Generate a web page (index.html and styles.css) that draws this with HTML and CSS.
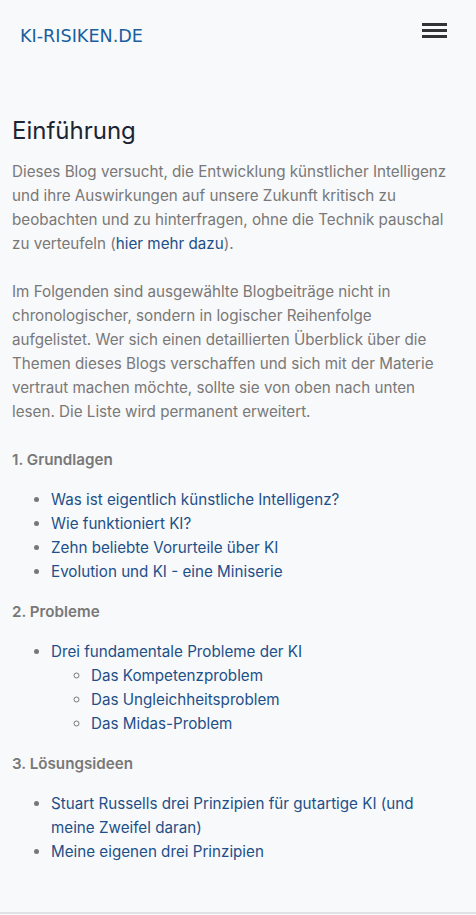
FILE: index.html
```html
<!DOCTYPE html>
<html lang="de">
<head>
<meta charset="utf-8">
<title>KI-Risiken.de</title>
<link rel="stylesheet" href="styles.css">
</head>
<body>
<header class="navbar">
  <a class="brand" href="#">KI-RISIKEN.DE</a>
  <button class="toggler" aria-label="Menü">
    <span class="bar"></span>
    <span class="bar"></span>
    <span class="bar"></span>
  </button>
</header>
<main class="content">
  <h1 class="title">Einführung</h1>
  <p class="text">Dieses Blog versucht, die Entwicklung künstlicher Intelligenz und ihre Auswirkungen auf unsere Zukunft kritisch zu beobachten und zu hinterfragen, ohne die Technik pauschal zu verteufeln (<a href="#">hier mehr dazu</a>).</p>
  <p class="text">Im Folgenden sind ausgewählte Blogbeiträge nicht in chronologischer, sondern in logischer Reihenfolge aufgelistet. Wer sich einen detaillierten Überblick über die Themen dieses Blogs verschaffen und sich mit der Materie vertraut machen möchte, sollte sie von oben nach unten lesen. Die Liste wird permanent erweitert.</p>

  <h4 class="section">1. Grundlagen</h4>
  <ul class="list">
    <li><a href="#">Was ist eigentlich künstliche Intelligenz?</a></li>
    <li><a href="#">Wie funktioniert KI?</a></li>
    <li><a href="#">Zehn beliebte Vorurteile über KI</a></li>
    <li><a href="#">Evolution und KI - eine Miniserie</a></li>
  </ul>

  <h4 class="section">2. Probleme</h4>
  <ul class="list">
    <li><a href="#">Drei fundamentale Probleme der KI</a>
      <ul class="sublist">
        <li><a href="#">Das Kompetenzproblem</a></li>
        <li><a href="#">Das Ungleichheitsproblem</a></li>
        <li><a href="#">Das Midas-Problem</a></li>
      </ul>
    </li>
  </ul>

  <h4 class="section">3. Lösungsideen</h4>
  <ul class="list">
    <li><a href="#">Stuart Russells drei Prinzipien für gutartige KI (und meine Zweifel daran)</a></li>
    <li><a href="#">Meine eigenen drei Prinzipien</a></li>
  </ul>
</main>
<footer class="footer"></footer>
</body>
</html>
```

FILE: styles.css
```css
html, body {
  margin: 0;
  padding: 0;
  background: #f8f9fa;
}

body {
  font-family: Inter, Roboto, sans-serif;
  font-size: 15.2px;
  line-height: 24px;
  color: #787878;
}

a {
  color: #1d5089;
  text-decoration: none;
}

.navbar {
  display: flex;
  justify-content: space-between;
  align-items: center;
  padding: 16px 29px 20px 20px;
  height: 36px;
}

.brand {
  font-family: "DejaVu Sans", sans-serif;
  font-size: 17.6px;
  line-height: 24px;
  color: #1a5e9e;
  padding-top: 4px;
}

.toggler {
  display: flex;
  flex-direction: column;
  gap: 3px;
  background: none;
  border: 0;
  padding: 0;
  margin-top: -8px;
  cursor: pointer;
}

.bar {
  display: block;
  width: 25px;
  height: 3px;
  background: #333333;
}

.content {
  padding: 44px 24px 32px 12px;
}

.title {
  margin: 0 0 14px 0;
  font-size: 24px;
  line-height: 30px;
  font-weight: 400;
  color: #1c2433;
}

.text {
  margin: 0 0 24px 0;
}

.section {
  margin: 0;
  font-size: 15.2px;
  line-height: 24px;
  font-weight: 600;
  color: #787878;
}

.list {
  margin: 16px 0;
  padding-left: 39px;
}

.sublist {
  margin: 0;
  padding-left: 40px;
  list-style-type: circle;
}

.footer {
  border-top: 2px solid #dee2e6;
  height: 40px;
}
```
